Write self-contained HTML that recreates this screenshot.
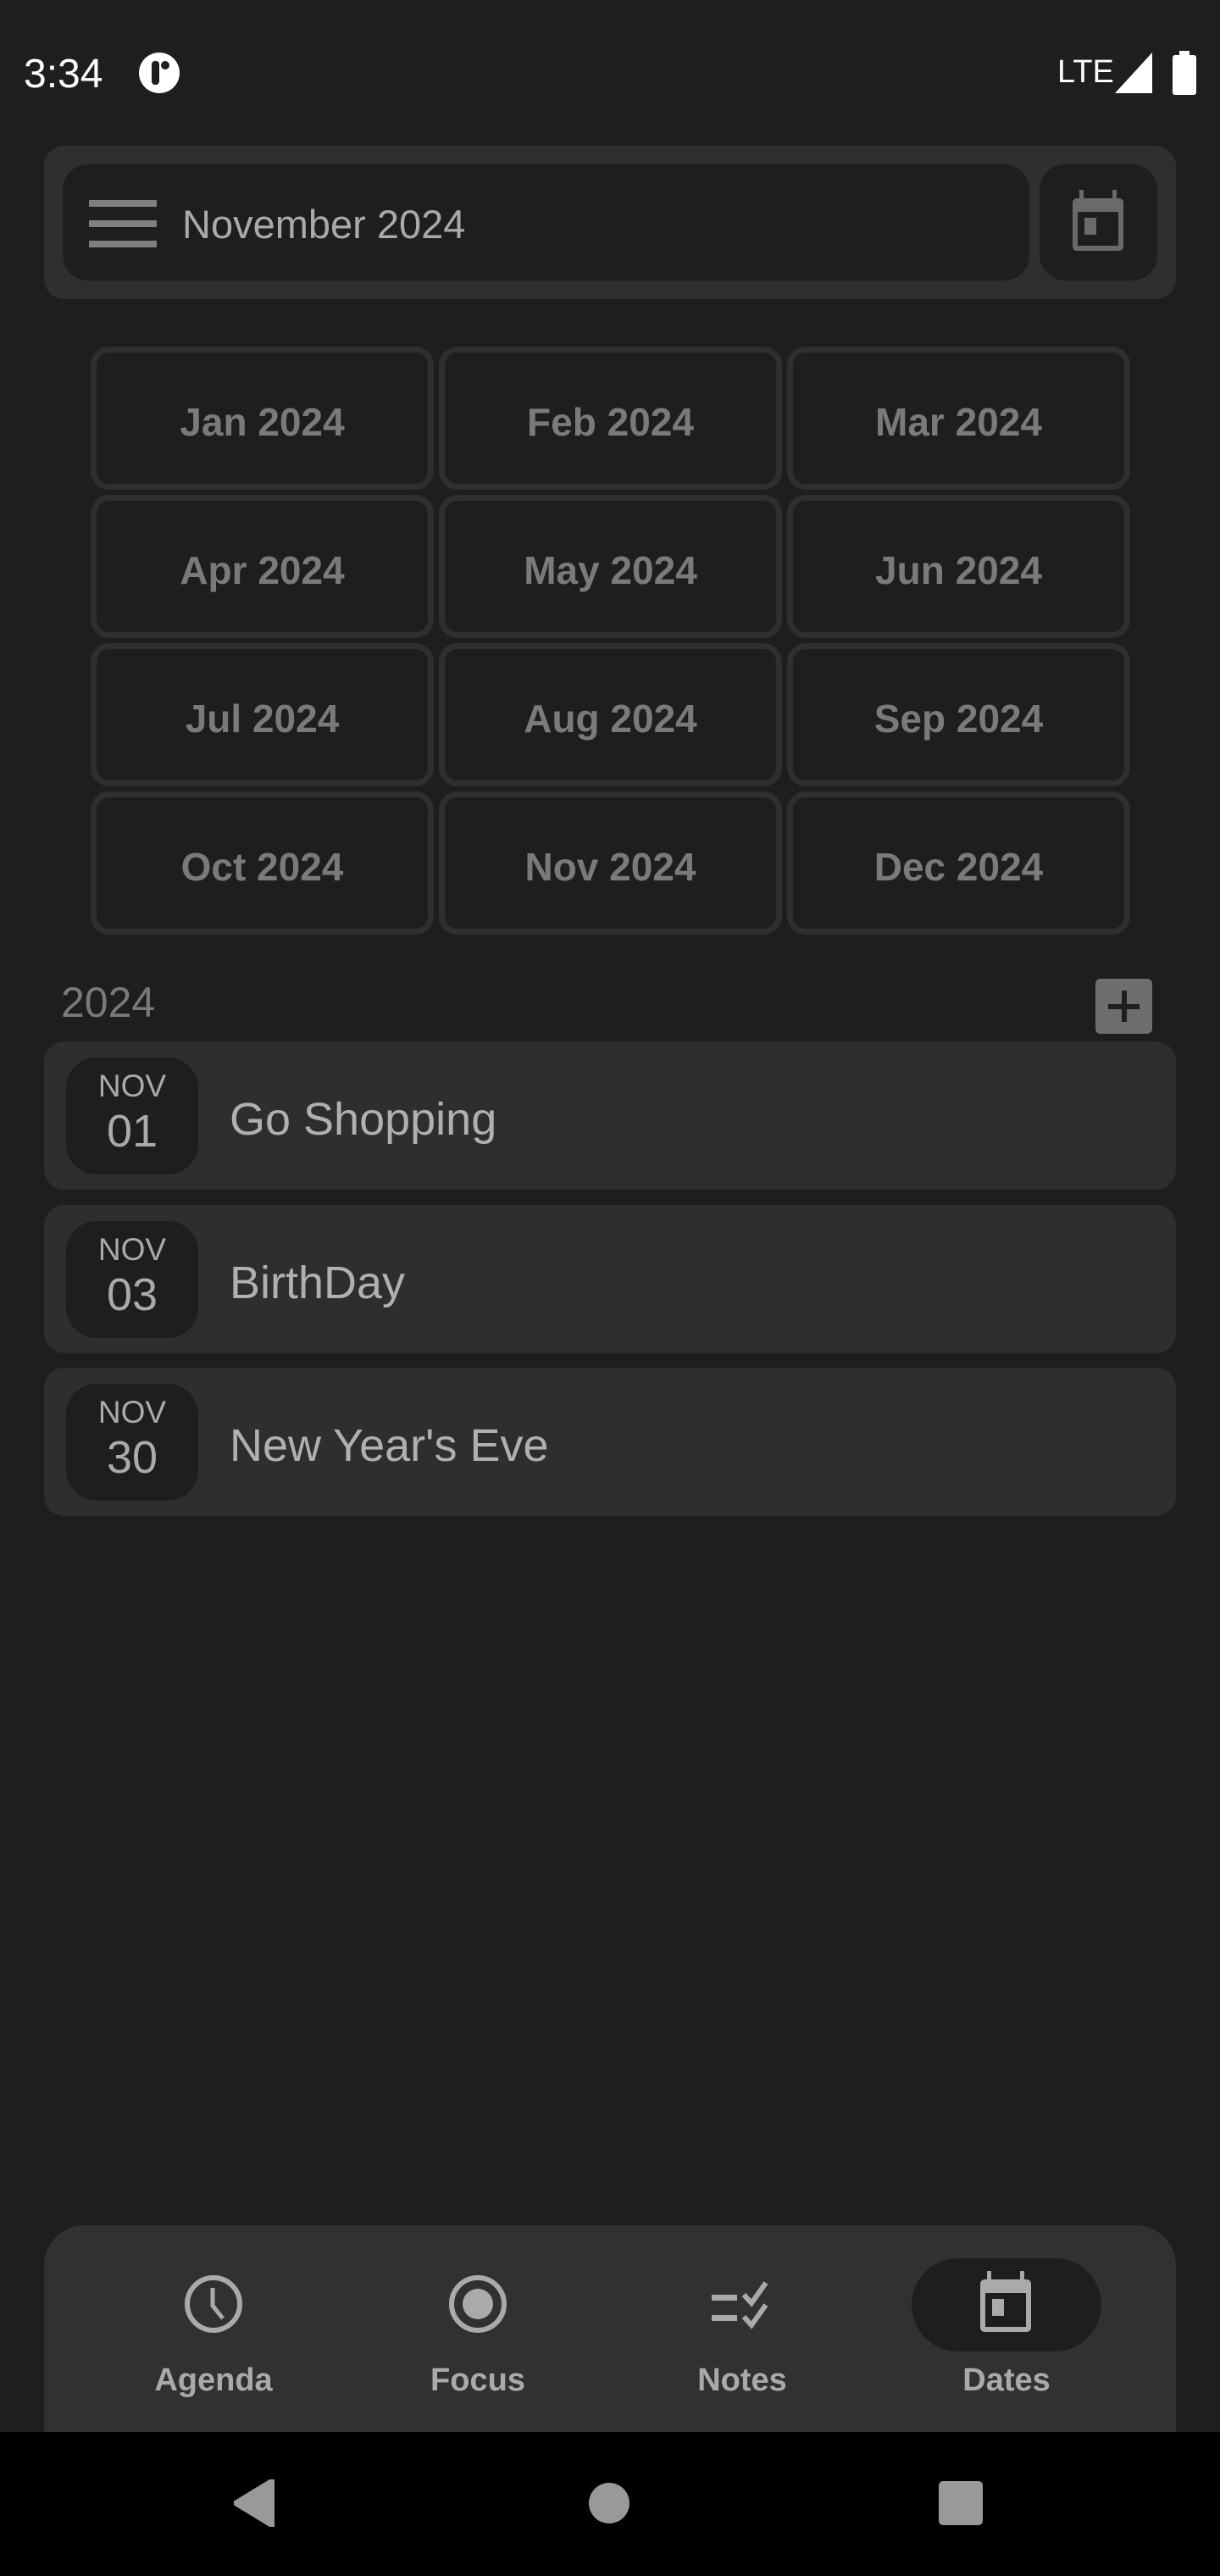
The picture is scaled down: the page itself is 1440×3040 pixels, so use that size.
<!DOCTYPE html>
<html><head><meta charset="utf-8"><style>
*{margin:0;padding:0;box-sizing:border-box}
body{width:1440px;height:3040px;background:#1e1e1e;position:relative;overflow:hidden;font-family:"Liberation Sans",sans-serif}
.a{position:absolute}
.cell{position:absolute;width:405px;height:169px;border:7px solid #2f2f2f;border-radius:22px;background:#1e1e1e;color:#7a7a7a;font-weight:bold;font-size:46px;display:flex;align-items:center;justify-content:center;padding-top:8px}
.card{position:absolute;left:52px;width:1336px;height:175px;background:#2e2e2e;border-radius:24px}
.badge{position:absolute;left:26px;top:19px;width:156px;height:138px;background:#1e1e1e;border-radius:36px;color:#aaa;text-align:center}
.badge .m{font-size:37px;margin-top:14px;line-height:40px}
.badge .d{font-size:54px;line-height:66px}
.title{position:absolute;left:219px;top:4px;height:175px;display:flex;align-items:center;color:#b0b0b0;font-size:54px}
.nl{position:absolute;top:2788px;width:200px;text-align:center;color:#aaa;font-weight:bold;font-size:38px}
</style></head><body>
<div class="a" style="left:28px;top:60px;color:#fff;font-size:48px">3:34</div>
<svg class="a" style="left:162px;top:60px" width="52" height="52" viewBox="0 0 52 52"><circle cx="26" cy="26" r="24" fill="#fff"/><rect x="17" y="12" width="9" height="28" rx="4" fill="#1e1e1e"/><circle cx="33" cy="17" r="5" fill="#1e1e1e"/></svg>
<div class="a" style="left:1248px;top:64px;color:#fff;font-size:38px">LTE</div>
<svg class="a" style="left:1316px;top:62px" width="44" height="48"><polygon points="44,0 44,48 0,48" fill="#fff"/></svg>
<svg class="a" style="left:1384px;top:60px" width="28" height="52"><rect x="8" y="0" width="12" height="6" fill="#fff"/><rect x="0" y="5" width="28" height="47" rx="3" fill="#fff"/></svg>

<div class="a" style="left:52px;top:172px;width:1336px;height:181px;background:#2f2f2f;border-radius:24px"></div>
<div class="a" style="left:74px;top:194px;width:1141px;height:137px;background:#1e1e1e;border-radius:30px"></div>
<div class="a" style="left:1227px;top:194px;width:139px;height:137px;background:#1e1e1e;border-radius:30px"></div>
<svg class="a" style="left:105px;top:236px" width="80" height="56"><rect y="0" width="80" height="8" fill="#808080"/><rect y="24" width="80" height="8" fill="#808080"/><rect y="48" width="80" height="8" fill="#808080"/></svg>
<div class="a" style="left:215px;top:237px;color:#aaa;font-size:47px">November 2024</div>
<svg class="a" style="left:1264px;top:224px" width="64" height="74" viewBox="0 0 64 74"><rect x="10" y="0" width="5" height="12" fill="#6a6a6a"/><rect x="49" y="0" width="5" height="12" fill="#6a6a6a"/><rect x="2" y="10" width="60" height="62" rx="5" fill="#6a6a6a"/><rect x="8" y="26" width="48" height="40" fill="#1e1e1e"/><rect x="16" y="33" width="14" height="20" fill="#6a6a6a"/></svg>

<div class="cell" style="left:107px;top:409px">Jan 2024</div>
<div class="cell" style="left:518px;top:409px">Feb 2024</div>
<div class="cell" style="left:929px;top:409px">Mar 2024</div>
<div class="cell" style="left:107px;top:584px">Apr 2024</div>
<div class="cell" style="left:518px;top:584px">May 2024</div>
<div class="cell" style="left:929px;top:584px">Jun 2024</div>
<div class="cell" style="left:107px;top:759px">Jul 2024</div>
<div class="cell" style="left:518px;top:759px">Aug 2024</div>
<div class="cell" style="left:929px;top:759px">Sep 2024</div>
<div class="cell" style="left:107px;top:934px">Oct 2024</div>
<div class="cell" style="left:518px;top:934px">Nov 2024</div>
<div class="cell" style="left:929px;top:934px">Dec 2024</div>

<div class="a" style="left:72px;top:1154px;color:#7a7a7a;font-size:50px">2024</div>
<svg class="a" style="left:1293px;top:1155px" width="67" height="65"><rect width="67" height="65" rx="6" fill="#6e6e6e"/><rect x="31" y="14" width="6" height="37" fill="#1e1e1e"/><rect x="15" y="30" width="37" height="6" fill="#1e1e1e"/></svg>

<div class="card" style="top:1229px"><div class="badge"><div class="m">NOV</div><div class="d">01</div></div><div class="title">Go Shopping</div></div>
<div class="card" style="top:1422px"><div class="badge"><div class="m">NOV</div><div class="d">03</div></div><div class="title">BirthDay</div></div>
<div class="card" style="top:1614px"><div class="badge"><div class="m">NOV</div><div class="d">30</div></div><div class="title">New Year's Eve</div></div>

<div class="a" style="left:52px;top:2626px;width:1336px;height:300px;background:#313131;border-radius:48px"></div>
<div class="a" style="left:1076px;top:2665px;width:224px;height:110px;background:#1e1e1e;border-radius:55px"></div>
<svg class="a" style="left:217px;top:2684px" width="70" height="70" viewBox="0 0 70 70"><circle cx="35" cy="35" r="31" fill="none" stroke="#aaa" stroke-width="6"/><path d="M34 16 V37 L46 52" fill="none" stroke="#aaa" stroke-width="5"/></svg>
<svg class="a" style="left:529px;top:2684px" width="70" height="70" viewBox="0 0 70 70"><circle cx="35" cy="35" r="31" fill="none" stroke="#aaa" stroke-width="6"/><circle cx="35" cy="35" r="18" fill="#aaa"/></svg>
<svg class="a" style="left:840px;top:2690px" width="72" height="62" viewBox="0 0 72 62"><rect x="0" y="18" width="30" height="7" fill="#aaa"/><rect x="0" y="42" width="30" height="7" fill="#aaa"/><path d="M38 18 L47 28 L64 4 M38 44 L47 54 L64 30" fill="none" stroke="#aaa" stroke-width="6"/></svg>
<svg class="a" style="left:1154px;top:2680px" width="66" height="74" viewBox="0 0 64 74"><rect x="10" y="0" width="5" height="12" fill="#aaa"/><rect x="49" y="0" width="5" height="12" fill="#aaa"/><rect x="2" y="10" width="60" height="62" rx="5" fill="#aaa"/><rect x="8" y="26" width="48" height="40" fill="#1e1e1e"/><rect x="16" y="33" width="14" height="20" fill="#aaa"/></svg>
<div class="nl" style="left:152px">Agenda</div>
<div class="nl" style="left:464px">Focus</div>
<div class="nl" style="left:776px">Notes</div>
<div class="nl" style="left:1088px">Dates</div>

<div class="a" style="left:0;top:2870px;width:1440px;height:170px;background:#000"></div>
<svg class="a" style="left:276px;top:2926px" width="48" height="56"><polygon points="46,0 46,56 0,28" fill="#999" stroke="#999" stroke-width="4" stroke-linejoin="round"/></svg>
<div class="a" style="left:695px;top:2930px;width:48px;height:48px;border-radius:50%;background:#999"></div>
<div class="a" style="left:1108px;top:2928px;width:52px;height:52px;border-radius:5px;background:#999"></div>
</body></html>
